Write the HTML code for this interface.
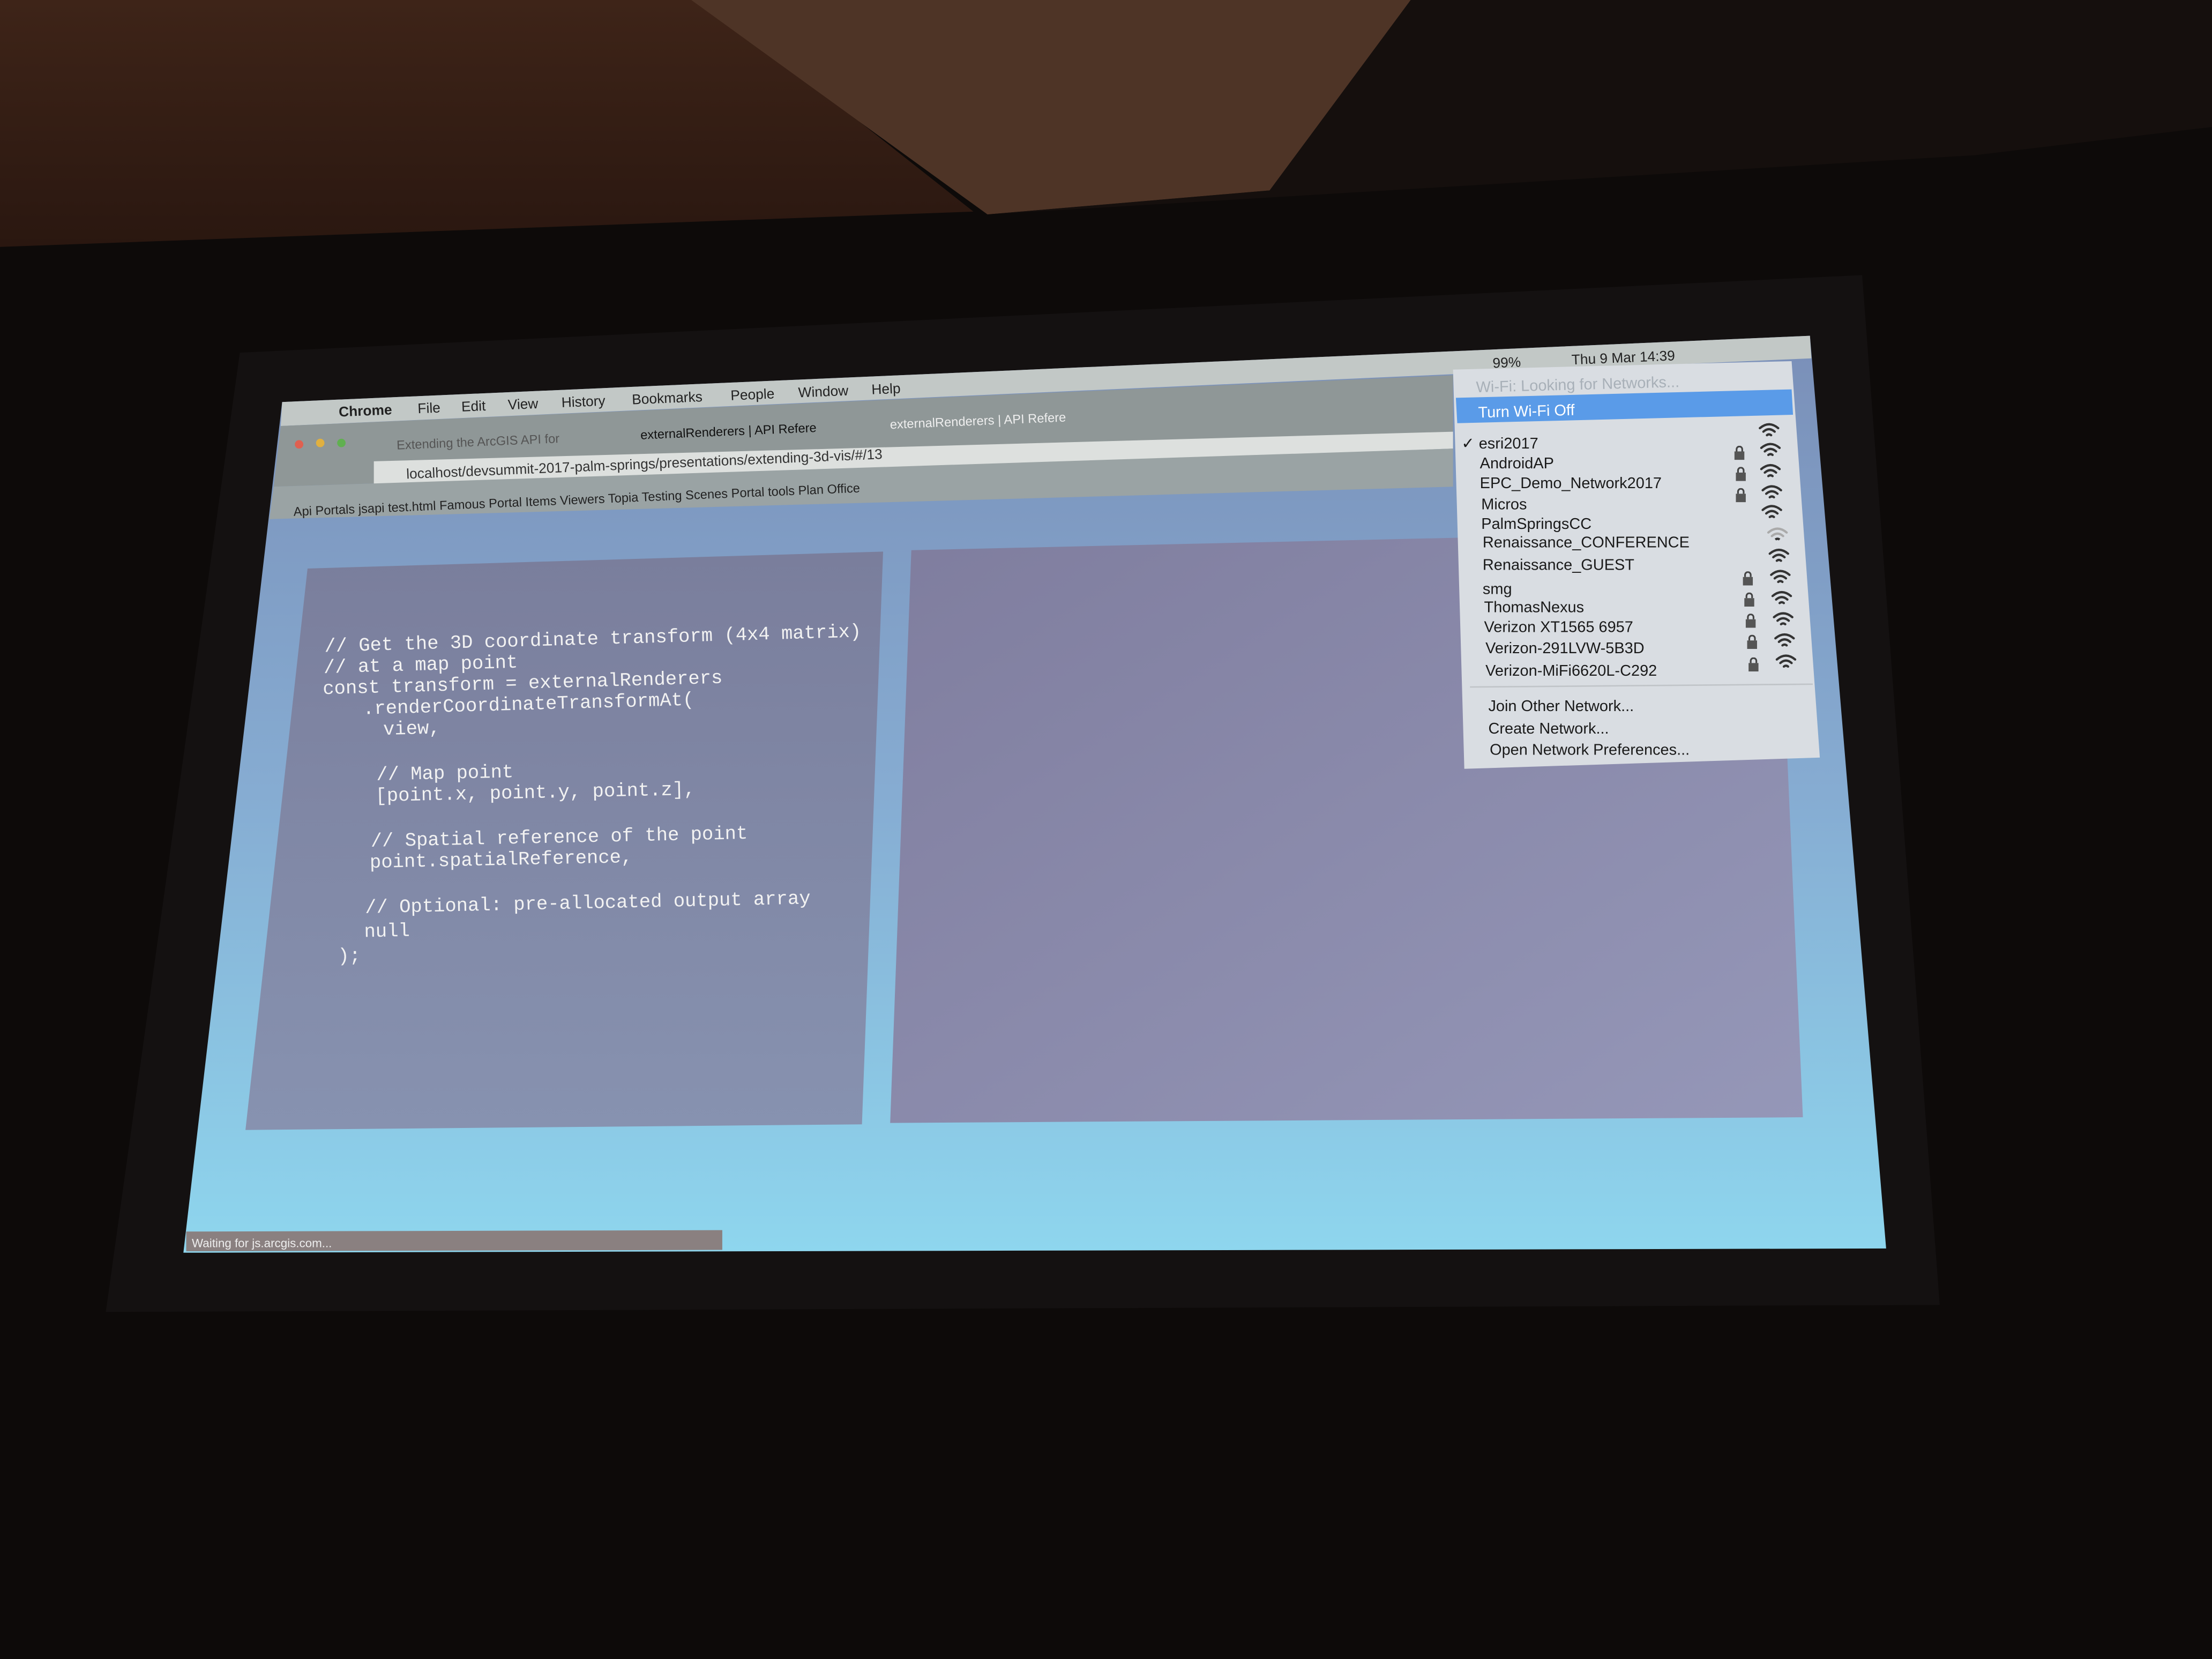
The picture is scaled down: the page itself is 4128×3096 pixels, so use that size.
<!DOCTYPE html>
<html><head><meta charset="utf-8"><style>
html,body{margin:0;padding:0;background:#0d0a09;overflow:hidden}
svg{display:block}
text{font-family:"Liberation Sans",sans-serif}
.m text{font-family:"Liberation Mono",monospace}
</style></head><body>
<svg width="4128" height="3096" viewBox="0 0 1568 1176" preserveAspectRatio="none" xmlns="http://www.w3.org/2000/svg">
<defs>
<linearGradient id="wall" x1="0" y1="0" x2="0" y2="1"><stop offset="0" stop-color="#3e2418"/><stop offset="1" stop-color="#2a1710"/></linearGradient>
<linearGradient id="slide" x1="0" y1="0" x2="0" y2="1"><stop offset="0" stop-color="#7a8fb8"/><stop offset="0.5" stop-color="#86acd2"/><stop offset="1" stop-color="#8ed6ee"/></linearGradient>
<linearGradient id="p1" x1="0" y1="0" x2="0" y2="1"><stop offset="0" stop-color="#7a7e9c"/><stop offset="1" stop-color="#8792b0"/></linearGradient>
<linearGradient id="p2" x1="0" y1="0" x2="1" y2="1"><stop offset="0" stop-color="#7f7d9e"/><stop offset="1" stop-color="#9597b8"/></linearGradient>
<symbol id="wf" viewBox="0 0 16 12"><g fill="none" stroke="#333" stroke-width="1.6" stroke-linecap="round"><path d="M1.5 4.5 Q8 -1 14.5 4.5"/><path d="M4 7 Q8 3.5 12 7"/><path d="M6.5 9.5 Q8 8.3 9.5 9.5"/></g></symbol>
<symbol id="wfl" viewBox="0 0 16 12"><g fill="none" stroke="#aaa" stroke-width="1.6" stroke-linecap="round"><path d="M1.5 4.5 Q8 -1 14.5 4.5"/><path d="M4 7 Q8 3.5 12 7"/></g><path d="M6.5 9.5 Q8 8.3 9.5 9.5" fill="none" stroke="#333" stroke-width="1.6"/></symbol>
<symbol id="lk" viewBox="0 0 8 10"><path d="M2 4 V2.5 A2 2 0 0 1 6 2.5 V4" fill="none" stroke="#444" stroke-width="1.2"/><rect x="0.5" y="4" width="7" height="6" fill="#555"/></symbol>
</defs>
<rect width="1568" height="1176" fill="#0d0a09"/>
<polygon points="0,0 500,0 690,150 0,175" fill="url(#wall)"/>
<polygon points="490,0 1000,0 900,135 700,152" fill="#4e3426"/>
<polygon points="700,152 900,135 1000,0 1568,0 1568,90 1400,110" fill="#150f0d"/>
<polygon points="170,250 1320,195 1375,925 75,930" fill="#141111"/>
<polygon points="200,285 1283,238 1337,885 130,888" fill="url(#slide)"/>
<polygon points="200,285 1283,238 1284,254 199,302" fill="#c2c8c6"/>
<polygon points="199,302 1030,266 1030,318 194,345" fill="#8f9797"/>
<polygon points="265,327 1030,306 1030,318 265,345" fill="#dde0de"/>
<polygon points="194,345 1030,318 1030,345 191,368" fill="#9aa3a4"/>
<g transform="rotate(-2.4 200 290)" font-size="10" fill="#222">
<text x="240" y="297" font-weight="bold">Chrome</text>
<text x="296" y="297">File</text><text x="327" y="297">Edit</text><text x="360" y="297">View</text><text x="398" y="297">History</text><text x="448" y="297">Bookmarks</text><text x="518" y="297">People</text><text x="566" y="297">Window</text><text x="618" y="297">Help</text>
<text x="280" y="322" font-size="9" fill="#555">Extending the ArcGIS API for</text>
<text x="453" y="322" font-size="9" fill="#111">externalRenderers | API Refere</text>
<text x="630" y="322" font-size="9" fill="#eee">externalRenderers | API Refere</text>
<text x="286" y="343" font-size="10" fill="#333">localhost/devsummit-2017-palm-springs/presentations/extending-3d-vis/#/13</text>
<text x="205" y="366" font-size="9" fill="#222">Api   Portals   jsapi test.html   Famous Portal Items   Viewers   Topia   Testing   Scenes   Portal tools   Plan   Office</text>
</g>
<circle cx="212" cy="315" r="3" fill="#e06050"/><circle cx="227" cy="314" r="3" fill="#e0b040"/><circle cx="242" cy="314" r="3" fill="#60b050"/>
<g transform="rotate(-2.4 1100 255)" font-size="10" fill="#222"><text x="1058" y="259">99%</text><text x="1114" y="259">Thu 9 Mar  14:39</text></g>
<polygon points="218,403 626,391 611,797 174,801" fill="url(#p1)"/>
<polygon points="646,390 1260,376 1278,792 631,796" fill="url(#p2)"/>
<g class="m" font-size="13.5" fill="#f2f2f2">
<g transform="rotate(-1.6 230 460)">
<text x="230" y="462">// Get the 3D coordinate transform (4x4 matrix)</text>
<text x="229" y="477">// at a map point</text>
<text x="228" y="492">const transform = externalRenderers</text>
<text x="256" y="507">.renderCoordinateTransformAt(</text>
<text x="270" y="522">view,</text>
</g>
<g transform="rotate(-1.2 265 560)">
<text x="267" y="553">// Map point</text>
<text x="266" y="568">[point.x, point.y, point.z],</text>
<text x="262" y="600">// Spatial reference of the point</text>
<text x="261" y="615">point.spatialReference,</text>
<text x="257" y="647">// Optional: pre-allocated output array</text>
<text x="256" y="664">null</text>
<text x="237" y="681">);</text>
</g></g>
<polygon points="132,873 512,872 512,886 132,887" fill="#8a8080"/>
<text x="136" y="884" font-size="8.5" fill="#eee">Waiting for js.arcgis.com...</text>
<polygon points="1030,262 1270,256 1290,537 1038,545" fill="#d9dde2"/>
<polygon points="1032,282 1270,276 1271,294 1033,300" fill="#5a9be8"/>
<g font-size="11" fill="#1a1a1a">
<g transform="rotate(-1.5 1050 300)">
<text x="1047" y="278" fill="#a8b0b8">Wi-Fi: Looking for Networks...</text>
<text x="1048" y="296" fill="#fff">Turn Wi-Fi Off</text>
</g>
<text x="1036" y="318">✓ esri2017</text>
<text x="1049" y="332">AndroidAP</text>
<text x="1049" y="346">EPC_Demo_Network2017</text>
<text x="1050" y="361">Micros</text>
<text x="1050" y="375">PalmSpringsCC</text>
<text x="1051" y="388">Renaissance_CONFERENCE</text>
<text x="1051" y="404">Renaissance_GUEST</text>
<text x="1051" y="421">smg</text>
<text x="1052" y="434">ThomasNexus</text>
<text x="1052" y="448">Verizon XT1565 6957</text>
<text x="1053" y="463">Verizon-291LVW-5B3D</text>
<text x="1053" y="479">Verizon-MiFi6620L-C292</text>
<line x1="1042" y1="487" x2="1285" y2="485" stroke="#c0c4c8"/>
<text x="1055" y="504">Join Other Network...</text>
<text x="1055" y="520">Create Network...</text>
<text x="1056" y="535">Open Network Preferences...</text>
</g>
<use href="#wf" x="1246" y="299" width="16" height="12"/>
<use href="#wf" x="1247" y="313" width="16" height="12"/>
<use href="#wf" x="1247" y="328" width="16" height="12"/>
<use href="#wf" x="1248" y="343" width="16" height="12"/>
<use href="#wf" x="1248" y="357" width="16" height="12"/>
<use href="#wfl" x="1252" y="373" width="16" height="12"/>
<use href="#wf" x="1253" y="388" width="16" height="12"/>
<use href="#wf" x="1254" y="403" width="16" height="12"/>
<use href="#wf" x="1255" y="418" width="16" height="12"/>
<use href="#wf" x="1256" y="433" width="16" height="12"/>
<use href="#wf" x="1257" y="448" width="16" height="12"/>
<use href="#wf" x="1258" y="463" width="16" height="12"/>
<use href="#lk" x="1229" y="316" width="8" height="10"/>
<use href="#lk" x="1230" y="331" width="8" height="10"/>
<use href="#lk" x="1230" y="346" width="8" height="10"/>
<use href="#lk" x="1235" y="405" width="8" height="10"/>
<use href="#lk" x="1236" y="420" width="8" height="10"/>
<use href="#lk" x="1237" y="435" width="8" height="10"/>
<use href="#lk" x="1238" y="450" width="8" height="10"/>
<use href="#lk" x="1239" y="466" width="8" height="10"/>
</svg>
</body></html>
